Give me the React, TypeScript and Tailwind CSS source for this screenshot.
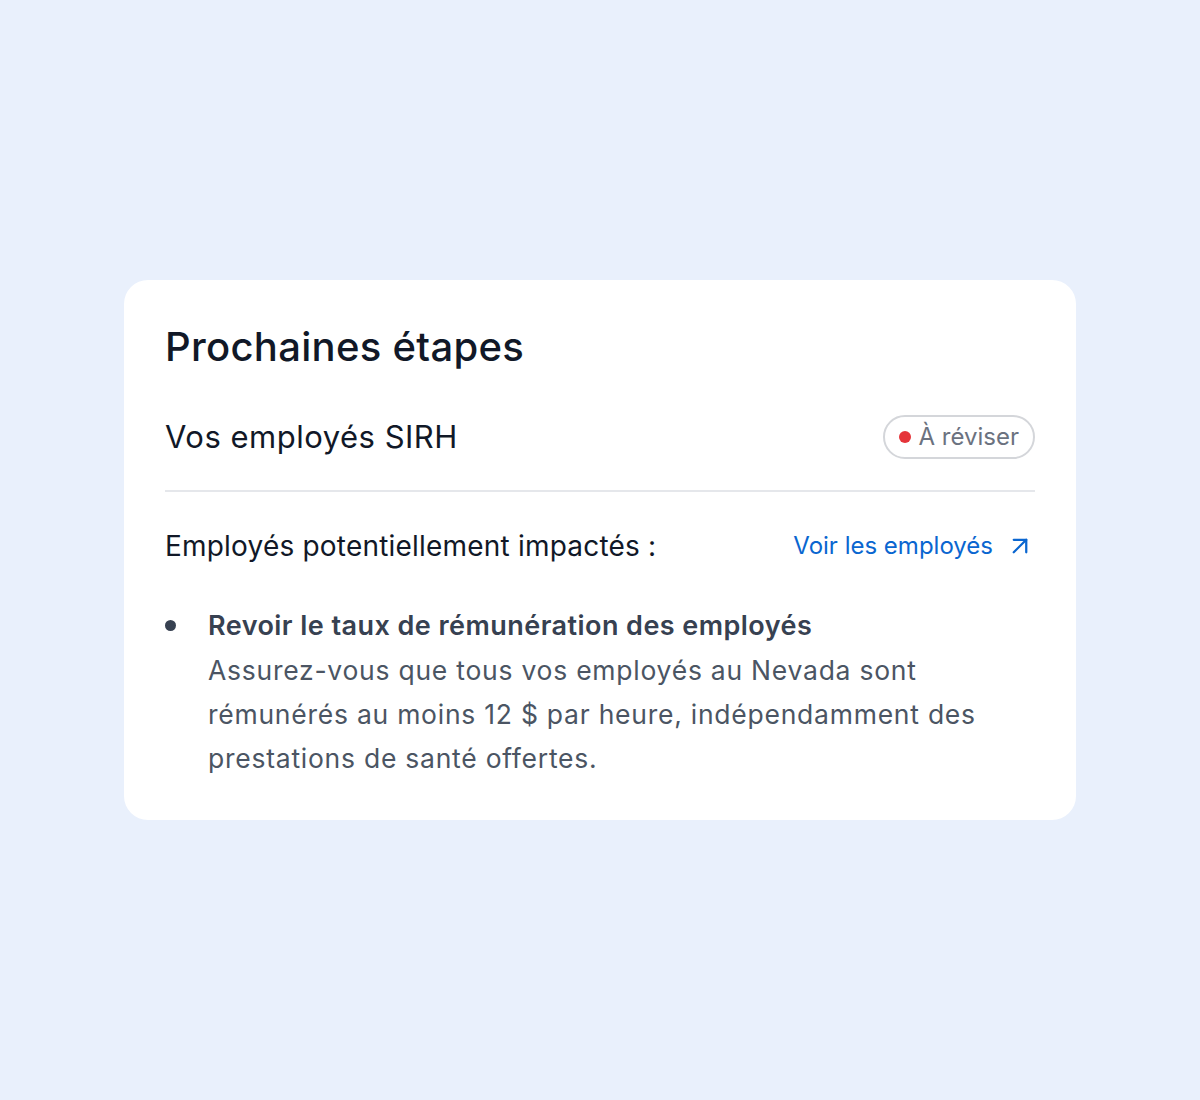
import { ArrowUpRight } from 'lucide-react';

export default function App() {
  return (
    <div className="flex h-[1100px] w-full items-center justify-center bg-[#e9f0fc] font-['Inter',sans-serif]">
      <div className="w-[952px] rounded-[24px] bg-white px-[41px] pb-[40px] pt-[44px]">
        <h2 className="text-[40px] font-medium leading-[46px] tracking-[0.3px] text-[#111827]">Prochaines étapes</h2>

        <div className="mt-[45px] flex items-center justify-between">
          <span className="text-[31px] leading-[36px] tracking-[0.5px] text-[#111827]">Vos employés SIRH</span>
          <span className="flex h-[44px] items-center gap-[8px] rounded-full border-2 border-[#d4d6da] px-[14px] text-[24px] text-[#6b7280]">
            <span className="h-[12px] w-[12px] rounded-full bg-[#e5343a]" />
            À réviser
          </span>
        </div>

        <div className="mt-[31px] h-[2px] bg-[#e5e7eb]" />

        <div className="mt-[38px] flex h-[32px] items-center justify-between">
          <span className="text-[28px] leading-[32px] tracking-[0.2px] text-[#111827]">Employés potentiellement impactés :</span>
          <a className="flex items-center gap-[12px] text-[24px] text-[#0a66d0]">
            Voir les employés
            <ArrowUpRight size={30} strokeWidth={1.8} />
          </a>
        </div>

        <ul className="mt-[42px]">
          <li className="flex gap-[32px] leading-[44px]">
            <span className="mt-[16px] h-[11px] w-[11px] shrink-0 rounded-full bg-[#374151]" />
            <div>
              <p className="text-[27px] font-semibold tracking-[0.45px] text-[#374151]">Revoir le taux de rémunération des employés</p>
              <p className="text-[26.5px] tracking-[0.75px] text-[#4b5563]">
                Assurez-vous que tous vos employés au Nevada sont rémunérés au moins 12 $ par heure, indépendamment des prestations de santé offertes.
              </p>
            </div>
          </li>
        </ul>
      </div>
    </div>
  );
}
